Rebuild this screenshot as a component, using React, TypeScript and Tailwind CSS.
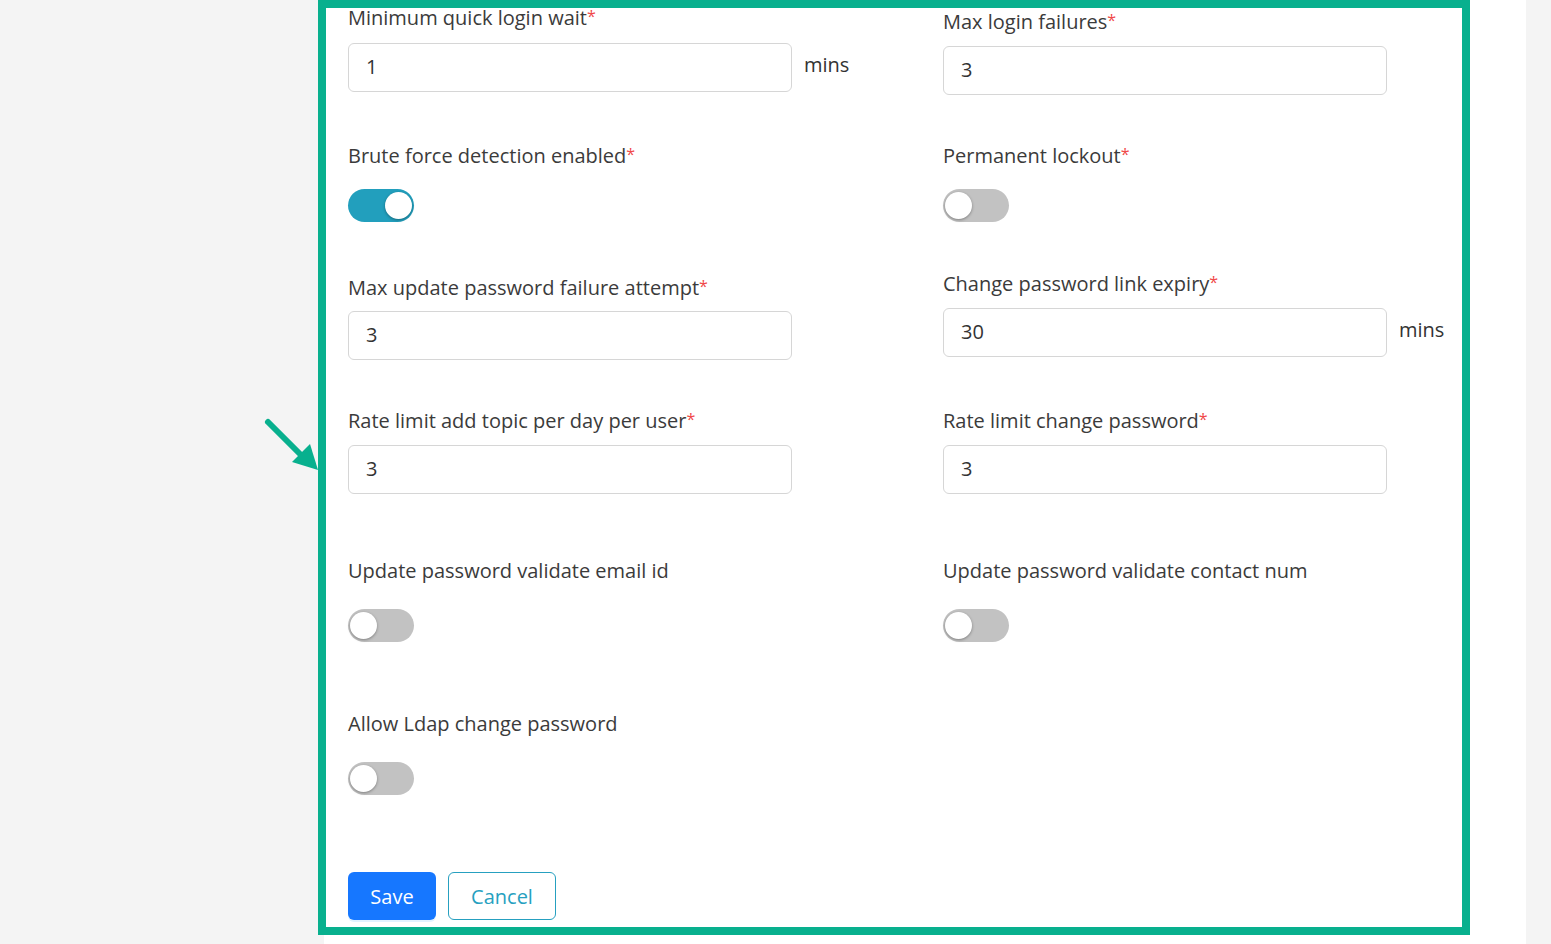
import React from "react";

function Label({ text, required }: { text: string; required?: boolean }) {
  return (
    <div className="h-7 leading-7 text-[20px] text-[#3b3b3b] whitespace-nowrap">
      {text}
      {required && <span className="text-[16px] text-[#f04848] align-top leading-6">*</span>}
    </div>
  );
}

function Field({ value, unit }: { value: string; unit?: boolean }) {
  return (
    <div className="flex items-center">
      <div className="w-[444px] h-[49px] border border-[#d6d6d6] rounded-md flex items-center pl-[17px] pb-[2px] text-[20px] text-[#333]">
        {value}
      </div>
      {unit && <span className="ml-3 text-[20px] text-[#333] -mt-[5px]">mins</span>}
    </div>
  );
}

function Toggle({ on }: { on?: boolean }) {
  return (
    <div
      className={
        on
          ? "relative w-[66px] h-[33px] rounded-full bg-[#229fbd]"
          : "relative w-[66px] h-[33px] rounded-full bg-[#c2c2c2]"
      }
    >
      <div
        className={
          on
            ? "absolute top-[3px] right-[2px] w-[27px] h-[27px] rounded-full bg-white shadow-[0_1px_3px_rgba(0,0,0,0.35)]"
            : "absolute top-[3px] left-[2px] w-[27px] h-[27px] rounded-full bg-white shadow-[0_1px_3px_rgba(0,0,0,0.35)]"
        }
      />
    </div>
  );
}

export default function App() {
  return (
    <main
      className="relative w-[1551px] h-[944px] bg-[#f4f4f4] flex overflow-hidden"
      style={{ fontFamily: "'Open Sans', Lato, sans-serif" }}
    >
      <div className="w-[324px] shrink-0" />
      <div className="w-[1202px] shrink-0 bg-white">
        <div className="-ml-[6px] w-[1152px] h-[935px] border-8 border-[#08b08e] flex pl-[22px] overflow-hidden">
          {/* left column */}
          <div className="w-[595px] shrink-0 flex flex-col">
            <div className="-mt-[4px]">
              <Label text="Minimum quick login wait" required />
            </div>
            <div className="mt-[11px]">
              <Field value="1" unit />
            </div>
            <div className="mt-[50px]">
              <Label text="Brute force detection enabled" required />
            </div>
            <div className="mt-[19px]">
              <Toggle on />
            </div>
            <div className="mt-[52px]">
              <Label text="Max update password failure attempt" required />
            </div>
            <div className="mt-[9px]">
              <Field value="3" />
            </div>
            <div className="mt-[47px]">
              <Label text="Rate limit add topic per day per user" required />
            </div>
            <div className="mt-[10px]">
              <Field value="3" />
            </div>
            <div className="mt-[63px]">
              <Label text="Update password validate email id" />
            </div>
            <div className="mt-[24px]">
              <Toggle />
            </div>
            <div className="mt-[68px]">
              <Label text="Allow Ldap change password" />
            </div>
            <div className="mt-[24px]">
              <Toggle />
            </div>
            <div className="mt-[77px] flex gap-3">
              <button className="w-[88px] h-12 pt-[2px] rounded-md bg-[#1677ff] text-white text-[20px] shadow-[0_2px_0_rgba(5,145,255,0.12)]">
                Save
              </button>
              <button className="w-[108px] h-12 pt-[2px] rounded-md border border-[#26a0c0] text-[#26a0c0] text-[20px] bg-white">
                Cancel
              </button>
            </div>
          </div>
          {/* right column */}
          <div className="flex-1 flex flex-col">
            <div className="mt-0">
              <Label text="Max login failures" required />
            </div>
            <div className="mt-[10px]">
              <Field value="3" />
            </div>
            <div className="mt-[47px]">
              <Label text="Permanent lockout" required />
            </div>
            <div className="mt-[19px]">
              <Toggle />
            </div>
            <div className="mt-[48px]">
              <Label text="Change password link expiry" required />
            </div>
            <div className="mt-[10px]">
              <Field value="30" unit />
            </div>
            <div className="mt-[50px]">
              <Label text="Rate limit change password" required />
            </div>
            <div className="mt-[10px]">
              <Field value="3" />
            </div>
            <div className="mt-[63px]">
              <Label text="Update password validate contact num" />
            </div>
            <div className="mt-[24px]">
              <Toggle />
            </div>
          </div>
        </div>
      </div>
      <div className="flex-1" />
      {/* annotation arrow */}
      <svg className="absolute left-[262px] top-[416px]" width="60" height="60" viewBox="0 0 60 60">
        <line x1="6" y1="6" x2="42" y2="42" stroke="#08b08e" strokeWidth="6" strokeLinecap="round" />
        <polygon points="56,54 30,46 48,28" fill="#08b08e" />
      </svg>
    </main>
  );
}
